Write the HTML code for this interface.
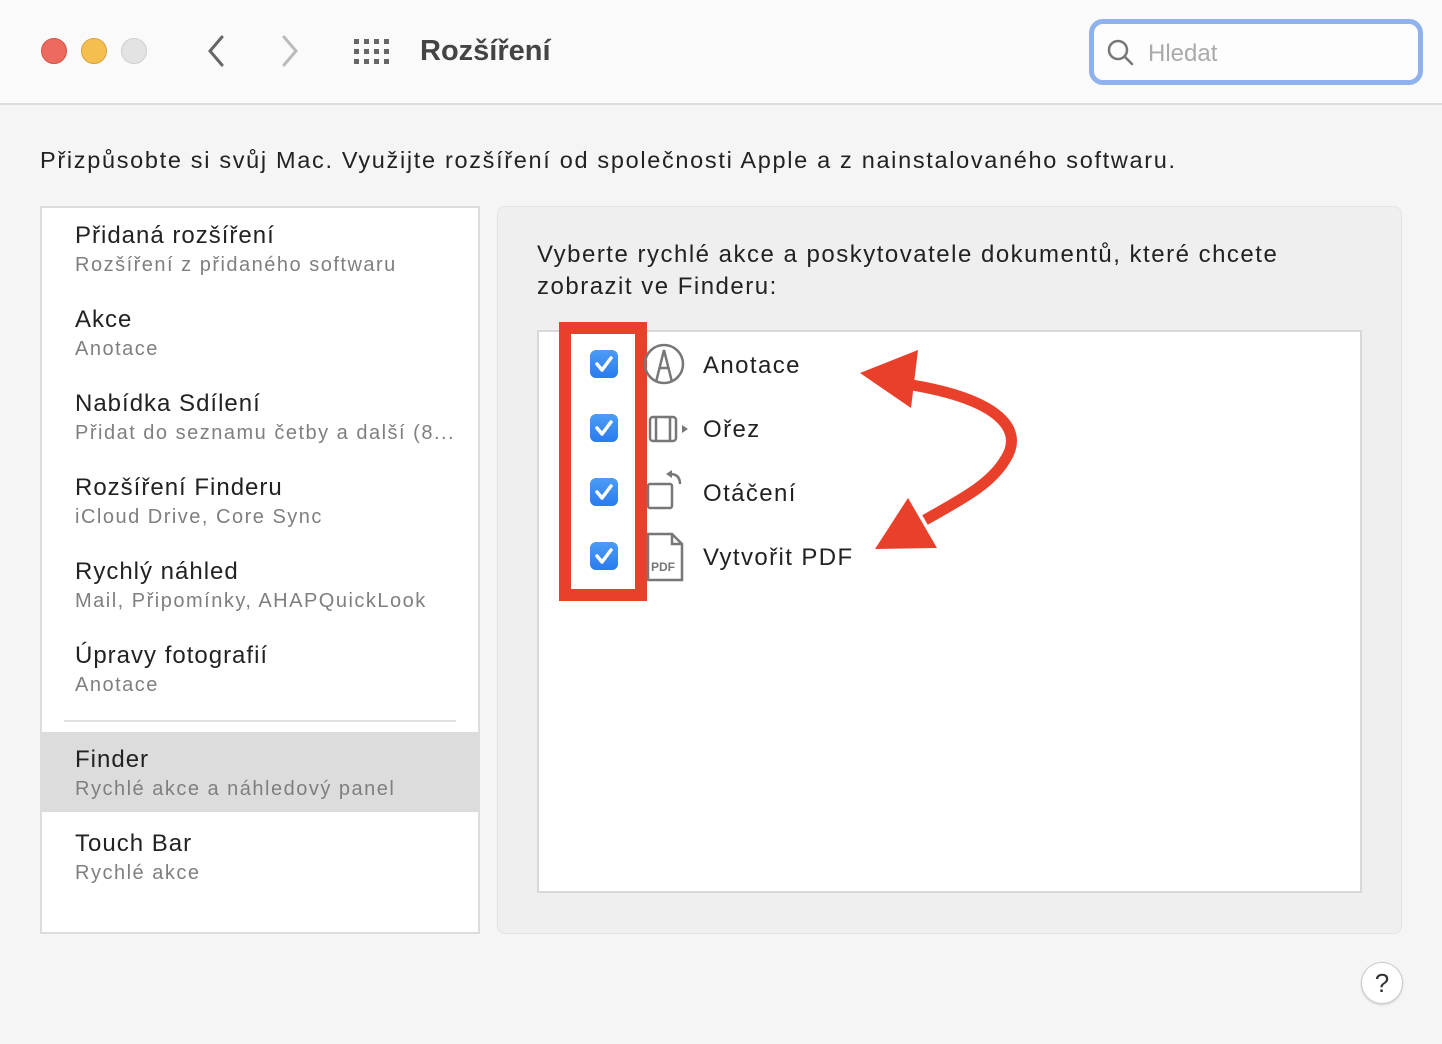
<!DOCTYPE html>
<html><head><meta charset="utf-8"><style>
*{margin:0;padding:0;box-sizing:border-box}
body{width:1442px;height:1044px;background:#f5f5f5;font-family:"Liberation Sans",sans-serif;position:relative;overflow:hidden;color:#222}
.abs{position:absolute}
.top{left:0;top:0;width:1442px;height:105px;background:#fafafa;border-bottom:2px solid #dcdcdc}
.dot{width:26px;height:26px;border-radius:50%;top:38px}
.t{font-size:24px;color:#222;white-space:nowrap;letter-spacing:1px}
.s{font-size:20px;color:#7f7f7f;white-space:nowrap;letter-spacing:1.5px}
.l{letter-spacing:1.4px}
.cb{width:28px;height:28px;border-radius:6px;background:linear-gradient(#4c9cf7,#2a7bef);left:590px}
</style></head><body>
<div class="abs top"></div>
<div class="abs dot" style="left:41px;background:#ec6a5e;border:1px solid #d45448"></div>
<div class="abs dot" style="left:81px;background:#f4bf4f;border:1px solid #d9a23c"></div>
<div class="abs dot" style="left:121px;background:#e3e3e3;border:1px solid #cfcfcf"></div>
<svg class="abs" style="left:200px;top:33px" width="110" height="36"><path d="M22 4 L10 18 L22 32" stroke="#666" stroke-width="3" fill="none" stroke-linecap="round"/><path d="M84 4 L96 18 L84 32" stroke="#bbb" stroke-width="3" fill="none" stroke-linecap="round"/></svg>
<svg class="abs" style="left:353px;top:38px" width="40" height="28">
<g fill="#666"><rect x="1" y="1" width="5" height="5"/><rect x="11" y="1" width="5" height="5"/><rect x="21" y="1" width="5" height="5"/><rect x="31" y="1" width="5" height="5"/><rect x="1" y="11" width="5" height="5"/><rect x="11" y="11" width="5" height="5"/><rect x="21" y="11" width="5" height="5"/><rect x="31" y="11" width="5" height="5"/><rect x="1" y="21" width="5" height="5"/><rect x="11" y="21" width="5" height="5"/><rect x="21" y="21" width="5" height="5"/><rect x="31" y="21" width="5" height="5"/></g></svg>
<div class="abs" style="left:420px;top:35px;font-size:29px;font-weight:bold;color:#444">Rozšíření</div>
<div class="abs" style="left:1089px;top:19px;width:334px;height:66px;border:5px solid #8fb1ec;border-radius:14px;background:#fdfdfd"></div>
<svg class="abs" style="left:1106px;top:38px" width="30" height="30"><circle cx="12" cy="12" r="9" stroke="#777" stroke-width="2.5" fill="none"/><path d="M19 19 L26 26" stroke="#777" stroke-width="2.5" stroke-linecap="round"/></svg>
<div class="abs" style="left:1148px;top:40px;font-size:24px;color:#aaa">Hledat</div>
<div class="abs" style="left:40px;top:147px;font-size:23.5px;color:#222;white-space:nowrap;letter-spacing:1.68px">Přizpůsobte si svůj Mac. Využijte rozšíření od společnosti Apple a z nainstalovaného softwaru.</div>
<div class="abs" style="left:40px;top:206px;width:440px;height:728px;background:#fff;border:2px solid #dcdcdc"></div>
<div class="abs" style="left:64px;top:720px;width:392px;height:2px;background:#e2e2e2"></div>
<div class="abs" style="left:42px;top:732px;width:436px;height:80px;background:#dcdcdc"></div>
<div class="abs t" style="left:75px;top:222px">Přidaná rozšíření</div><div class="abs s" style="left:75px;top:254px">Rozšíření z přidaného softwaru</div>
<div class="abs t" style="left:75px;top:306px">Akce</div><div class="abs s" style="left:75px;top:338px">Anotace</div>
<div class="abs t" style="left:75px;top:390px">Nabídka Sdílení</div><div class="abs s" style="left:75px;top:422px">Přidat do seznamu četby a další (8...</div>
<div class="abs t" style="left:75px;top:474px">Rozšíření Finderu</div><div class="abs s" style="left:75px;top:506px">iCloud Drive, Core Sync</div>
<div class="abs t" style="left:75px;top:558px">Rychlý náhled</div><div class="abs s" style="left:75px;top:590px">Mail, Připomínky, AHAPQuickLook</div>
<div class="abs t" style="left:75px;top:642px">Úpravy fotografií</div><div class="abs s" style="left:75px;top:674px">Anotace</div>
<div class="abs t" style="left:75px;top:746px">Finder</div><div class="abs s" style="left:75px;top:778px">Rychlé akce a náhledový panel</div>
<div class="abs t" style="left:75px;top:830px">Touch Bar</div><div class="abs s" style="left:75px;top:862px">Rychlé akce</div>
<div class="abs" style="left:497px;top:206px;width:905px;height:728px;background:#efefef;border:1px solid #e4e4e4;border-radius:8px"></div>
<div class="abs t" style="left:537px;top:239px;line-height:32px;font-size:24px;letter-spacing:1.5px">Vyberte rychlé akce a poskytovatele dokumentů, které chcete<br>zobrazit ve Finderu:</div>
<div class="abs" style="left:537px;top:330px;width:825px;height:563px;background:#fff;border:2px solid #d8d8d8"></div>
<div class="abs" style="left:559px;top:322px;width:88px;height:279px;border:12px solid #e8402a"></div>
<svg class="abs" style="left:0;top:0" width="1442" height="1044">
<g fill="none" stroke="#777" stroke-width="2.5">
<circle cx="664" cy="364" r="19"/><path d="M656 382 L664 350 L672 382 M660 368 h8"/>
<rect x="650" y="417" width="26" height="24" rx="3"/><path d="M656 418 v22 M670 418 v22"/>
<rect x="648" y="484" width="24" height="24" rx="2"/><path d="M670 474 q10 0 10 10"/>
<path d="M648 534 h24 l10 10 v36 h-34 z M672 534 v10 h10"/></g>
<path d="M688 429 l-6 -4 v8 z M672 470 l-6 4 l6 4 z" fill="#777"/>
<text x="651" y="571" font-family="Liberation Sans" font-size="12" font-weight="bold" fill="#777">PDF</text>
<path d="M912 385 C1000 400 1025 430 1005 460 C990 485 960 500 925 520" fill="none" stroke="#e8402a" stroke-width="11"/>
<path d="M860 373 L918 350 L911 408 Z" fill="#e8402a"/>
<path d="M875 549 L908 498 L937 548 Z" fill="#e8402a"/>
</svg>
<div class="cb abs" style="top:350px"></div>
<div class="cb abs" style="top:414px"></div>
<div class="cb abs" style="top:478px"></div>
<div class="cb abs" style="top:542px"></div>
<svg class="abs" style="left:0;top:0" width="1442" height="1044"><g fill="none" stroke="#fff" stroke-width="3.5" stroke-linecap="round" stroke-linejoin="round">
<path d="M597 364 l5 6 l9 -12"/><path d="M597 428 l5 6 l9 -12"/><path d="M597 492 l5 6 l9 -12"/><path d="M597 556 l5 6 l9 -12"/></g></svg>
<div class="abs t l" style="left:703px;top:352px">Anotace</div>
<div class="abs t l" style="left:703px;top:416px">Ořez</div>
<div class="abs t l" style="left:703px;top:480px">Otáčení</div>
<div class="abs t l" style="left:703px;top:544px">Vytvořit PDF</div>
<div class="abs" style="left:1361px;top:962px;width:42px;height:42px;border-radius:50%;background:#fff;border:1px solid #ccc;box-shadow:0 1px 2px rgba(0,0,0,.15);text-align:center;line-height:40px;font-size:26px;color:#333">?</div>
</body></html>
